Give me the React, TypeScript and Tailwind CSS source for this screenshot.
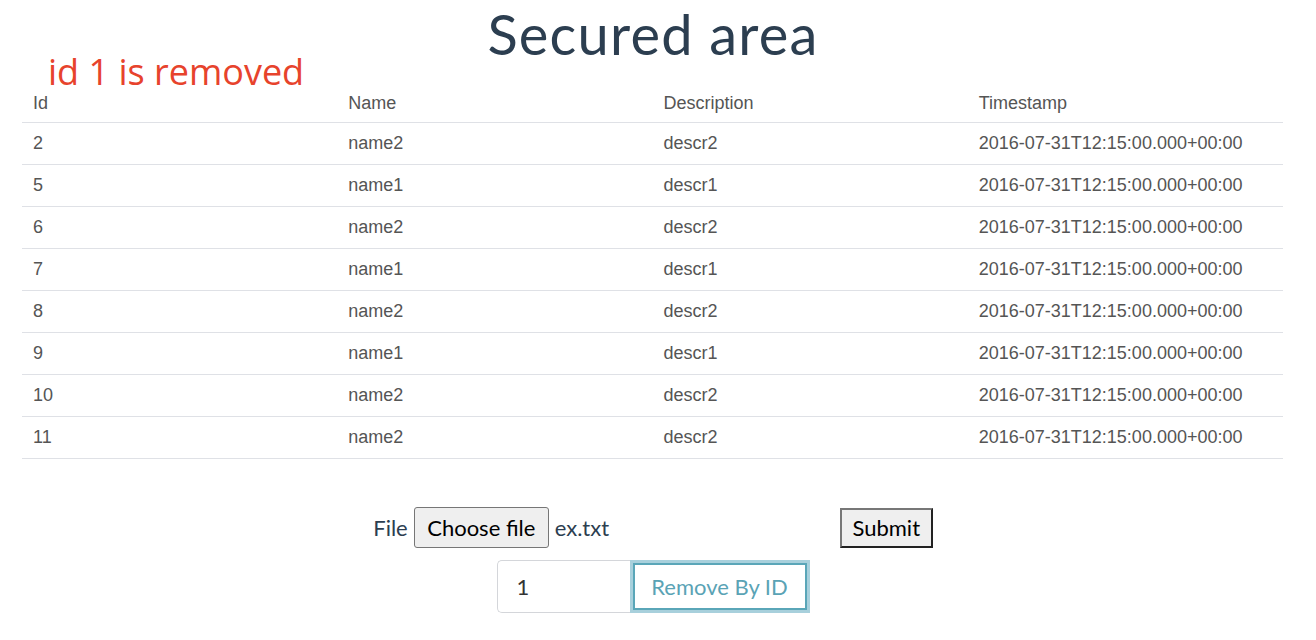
const rows = [
  { id: "2", name: "name2", descr: "descr2" },
  { id: "5", name: "name1", descr: "descr1" },
  { id: "6", name: "name2", descr: "descr2" },
  { id: "7", name: "name1", descr: "descr1" },
  { id: "8", name: "name2", descr: "descr2" },
  { id: "9", name: "name1", descr: "descr1" },
  { id: "10", name: "name2", descr: "descr2" },
  { id: "11", name: "name2", descr: "descr2" },
];

const ts = "2016-07-31T12:15:00.000+00:00";

export default function App() {
  return (
    <div className="w-[1316px] h-[640px] bg-white overflow-hidden font-['Lato',sans-serif] text-[#2c3e50]">
      <div className="w-[1306px]">
        {/* Title */}
        <h1 className="text-center text-[56px] leading-[68px] tracking-[1.2px] font-normal">
          Secured area
        </h1>

        {/* Status */}
        <div className="-mt-[12px] pl-[48px] font-['Open_Sans',sans-serif] text-[36px] leading-[32px] text-[#e7432c]">
          id 1 is removed
        </div>

        {/* Table */}
        <div className="ml-[22px] w-[1261px] font-['Liberation_Sans',sans-serif] text-[18px] text-[#555]">
          <div className="grid grid-cols-4 h-[35px] pb-[4px] items-center border-b border-[#dfe1e6]">
            <div className="pl-[11px]">Id</div>
            <div className="pl-[11px]">Name</div>
            <div className="pl-[11px]">Description</div>
            <div className="pl-[11px]">Timestamp</div>
          </div>
          {rows.map((r) => (
            <div
              key={r.id}
              className="grid grid-cols-4 h-[42px] items-center border-b border-[#dfe1e6]"
            >
              <div className="pl-[11px]">{r.id}</div>
              <div className="pl-[11px]">{r.name}</div>
              <div className="pl-[11px]">{r.descr}</div>
              <div className="pl-[11px]">{ts}</div>
            </div>
          ))}
        </div>

        {/* Upload form */}
        <div className="mt-[48px] flex justify-center items-center text-[22px]">
          <span className="mr-[6px]">File</span>
          <div className="w-[426px] flex items-center">
            <button className="h-[41px] w-[135px] rounded-[3px] border border-[#767676] bg-[#efefef] text-black">
              Choose file
            </button>
            <span className="ml-[6px]">ex.txt</span>
          </div>
          <button className="h-[40px] w-[93px] border-2 border-t-[#777] border-l-[#777] border-r-[#222] border-b-[#222] bg-[#efefef] text-black">
            Submit
          </button>
        </div>

        {/* Remove form */}
        <div className="mt-[12px] flex justify-center">
          <div className="h-[53px] w-[133px] flex items-center pl-[19px] rounded-l-[5px] border border-r-0 border-[#d4d6da] text-[22px] text-[#333]">
            1
          </div>
          <button className="h-[53px] w-[180px] border-[3px] border-[#a8d0dc] p-0">
            <div className="h-full w-full flex items-center justify-center border-2 border-[#5aa6b8] text-[22px] text-[#5aa3b5]">
              Remove By ID
            </div>
          </button>
        </div>
      </div>
    </div>
  );
}
